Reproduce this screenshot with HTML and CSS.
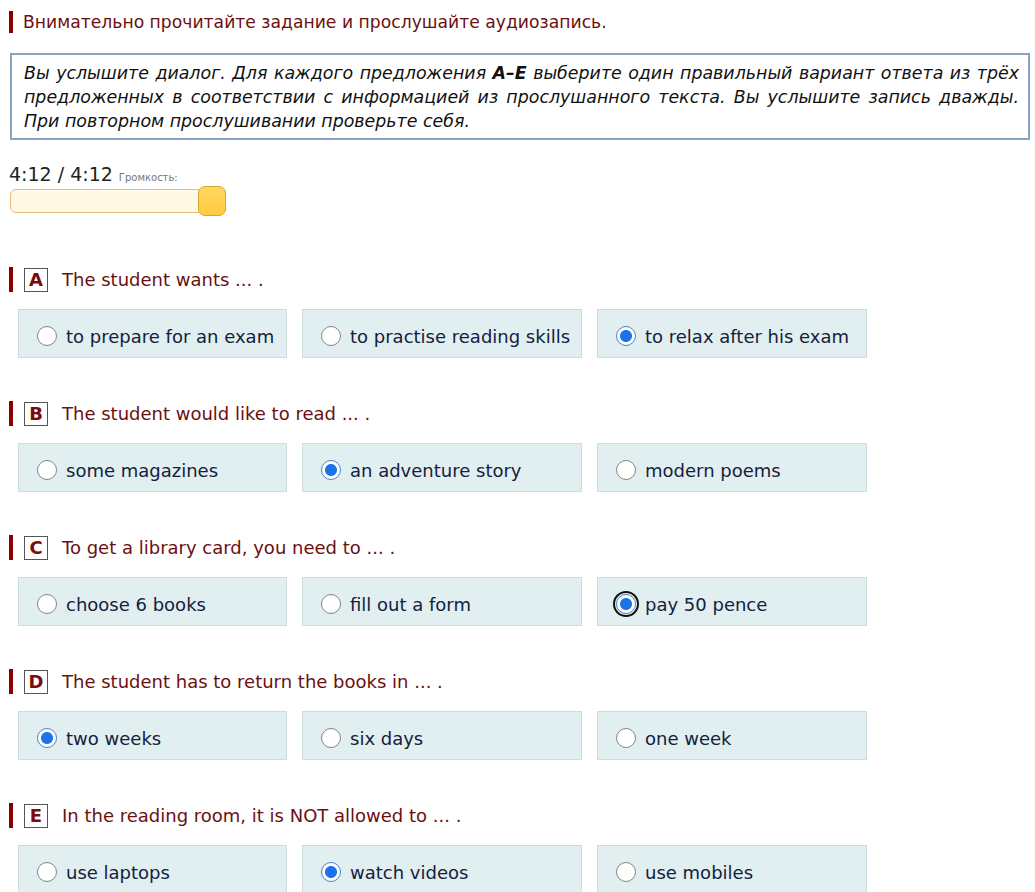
FILE: index.html
```html
<!DOCTYPE html>
<html lang="ru">
<head>
    <meta charset="UTF-8">
    <title>Аудирование</title>
    <link rel="stylesheet" href="styles.css">
</head>
<body>
    <div class="page">
        <div class="task-title">Внимательно прочитайте задание и прослушайте аудиозапись.</div>

        <div class="instruction">
            Вы услышите диалог. Для каждого предложения <b>A–E</b> выберите один правильный вариант ответа из трёх предложенных в соответствии с информацией из прослушанного текста. Вы услышите запись дважды. При повторном прослушивании проверьте себя.
        </div>

        <div class="player">
            <div class="time">4:12 / 4:12 <span class="volume-label">Громкость:</span></div>
            <div class="volume">
                <div class="handle"></div>
            </div>
        </div>

        <div class="question">
            <div class="q-head"><span class="letter">A</span> The student wants ... .</div>
            <div class="options">
                <label class="option"><input type="radio" name="qa"> to prepare for an exam</label>
                <label class="option"><input type="radio" name="qa"> to practise reading skills</label>
                <label class="option"><input type="radio" name="qa" checked> to relax after his exam</label>
            </div>
        </div>

        <div class="question">
            <div class="q-head"><span class="letter">B</span> The student would like to read ... .</div>
            <div class="options">
                <label class="option"><input type="radio" name="qb"> some magazines</label>
                <label class="option"><input type="radio" name="qb" checked> an adventure story</label>
                <label class="option"><input type="radio" name="qb"> modern poems</label>
            </div>
        </div>

        <div class="question">
            <div class="q-head"><span class="letter">C</span> To get a library card, you need to ... .</div>
            <div class="options">
                <label class="option"><input type="radio" name="qc"> choose 6 books</label>
                <label class="option"><input type="radio" name="qc"> fill out a form</label>
                <label class="option"><input type="radio" name="qc" class="focused" checked> pay 50 pence</label>
            </div>
        </div>

        <div class="question">
            <div class="q-head"><span class="letter">D</span> The student has to return the books in ... .</div>
            <div class="options">
                <label class="option"><input type="radio" name="qd" checked> two weeks</label>
                <label class="option"><input type="radio" name="qd"> six days</label>
                <label class="option"><input type="radio" name="qd"> one week</label>
            </div>
        </div>

        <div class="question">
            <div class="q-head"><span class="letter">E</span> In the reading room, it is NOT allowed to ... .</div>
            <div class="options">
                <label class="option"><input type="radio" name="qe"> use laptops</label>
                <label class="option"><input type="radio" name="qe" checked> watch videos</label>
                <label class="option"><input type="radio" name="qe"> use mobiles</label>
            </div>
        </div>
    </div>
</body>
</html>
```

FILE: styles.css
```css
body {
    margin: 0;
    background: white;
    font-family: "DejaVu Sans", Verdana, sans-serif;
    color: #1a1a2e;
}

.page {
    padding: 11px 5px 0 9px;
}

.task-title {
    border-left: 4px solid #8b0000;
    padding-left: 10px;
    font-size: 17.2px;
    line-height: 22px;
    color: #6b1010;
}

.instruction {
    margin: 20px 0 0 1px;
    border: 2px solid #87a4c4;
    padding: 6px 9px 5px 12px;
    font-style: italic;
    font-size: 17.4px;
    line-height: 24px;
    text-align: justify;
    color: #111;
}

.instruction b {
    font-weight: bold;
}

/* player */
.player {
    margin-top: 24px;
    width: 217px;
}

.time {
    font-size: 19px;
    line-height: 20px;
    color: #222;
}

.volume-label {
    font-size: 10px;
    color: #777;
}

.volume {
    position: relative;
    margin: 1px 0 0 1px;
    height: 22px;
    border: 1px solid #e2c27a;
    border-radius: 6px;
    background: #fff8e4;
}

.handle {
    position: absolute;
    right: -1px;
    top: -4px;
    width: 26px;
    height: 28px;
    border: 1px solid #d6a536;
    border-radius: 7px;
    background: linear-gradient(#ffd761, #ffcc40);
}

/* questions */
.question {
    margin-top: 54px;
}

.question + .question {
    margin-top: 43px;
}

.q-head {
    display: flex;
    align-items: center;
    gap: 14px;
    border-left: 4px solid #8b0000;
    padding-left: 11px;
    height: 25px;
    font-size: 18px;
    color: #6b1010;
}

.letter {
    display: inline-block;
    width: 22px;
    height: 22px;
    line-height: 22px;
    border: 1px solid #555;
    text-align: center;
    font-weight: bold;
    color: #7a0c0c;
}

.options {
    display: grid;
    grid-template-columns: 269px 280px 270px;
    gap: 15px;
    margin: 17px 0 0 9px;
}

.option {
    box-sizing: border-box;
    display: flex;
    align-items: center;
    gap: 9px;
    height: 49px;
    padding: 5px 0 0 18px;
    border: 1px solid #cddcdf;
    background: #e1eff1;
    font-size: 18px;
    color: #14213d;
}

.option input {
    appearance: none;
    margin: 0;
    width: 20px;
    height: 20px;
    border: 1px solid #858585;
    border-radius: 50%;
    background: white;
}

.option input:checked {
    border: 1.5px solid #4a7fd0;
    background: radial-gradient(circle, #1a73e8 0 5.5px, white 6.5px);
}

.option input.focused {
    outline: 2px solid #111;
    outline-offset: 1px;
}
```
